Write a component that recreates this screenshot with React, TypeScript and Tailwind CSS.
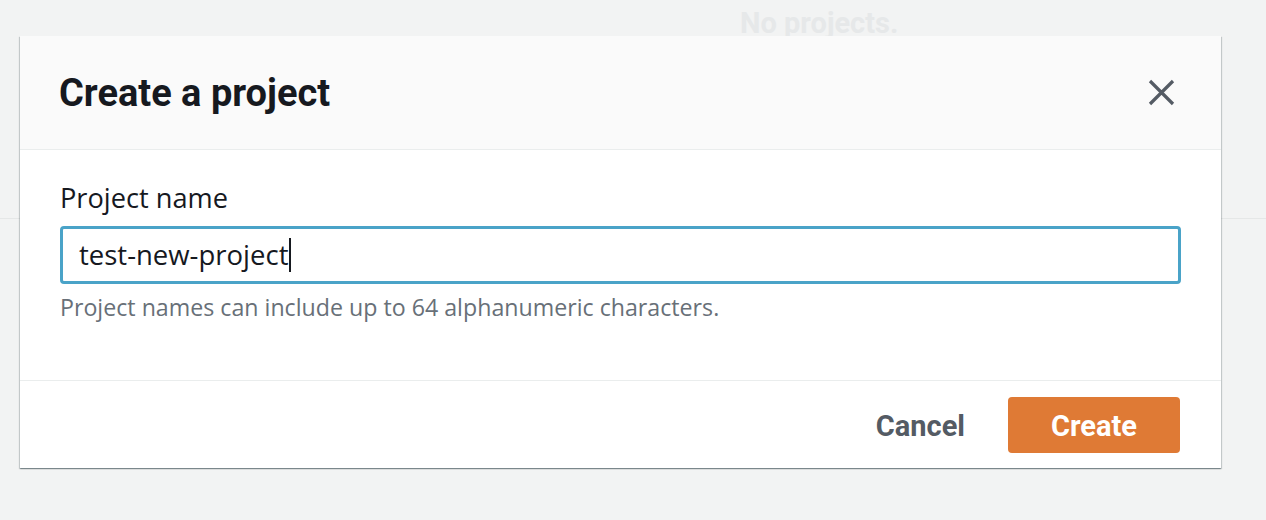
import React from 'react'

function CloseIcon() {
  return (
    <svg width="27" height="27" viewBox="0 0 27 27" fill="none" stroke="#545b64" strokeWidth={3.2}>
      <path d="M2 2L25 25M25 2L2 25" />
    </svg>
  )
}

export default function App() {
  return (
    <div className="relative h-[520px] w-full overflow-hidden bg-[#f2f3f3] font-[Roboto,sans-serif]">
      {/* page behind the dialog */}
      <div className="h-[219px] border-b border-[#e5e7e7] pl-[740px] pt-[9px]">
        <p className="text-[29px] font-bold leading-none text-[#e6e8e9]">No projects.</p>
      </div>

      {/* dialog */}
      <div className="absolute left-[20px] top-[36px] w-[1201px] bg-white shadow-[0_1px_1px_0_rgba(0,28,36,0.3),1px_1px_1px_0_rgba(0,28,36,0.15),-1px_1px_1px_0_rgba(0,28,36,0.15)]">
        <div className="flex h-[114px] items-center justify-between border-b border-[#eaeded] bg-[#fafafa] pl-[39px] pr-[46px]">
          <h2 className="text-[38px] font-bold leading-none text-[#16191f]">Create a project</h2>
          <button className="flex items-center justify-center">
            <CloseIcon />
          </button>
        </div>

        <div className="h-[231px] border-b border-[#eaeded] px-[40px] pt-[32px] font-['Open_Sans',sans-serif]">
          <label className="block text-[27.2px] leading-[32px] text-[#16191f]">Project name</label>
          <div className="mt-[12px] flex h-[58px] items-center rounded-[4px] border-[3px] border-[#4aa3c8] pl-[16px]">
            <span className="text-[27.5px] leading-none text-[#16191f]">test-new-project</span>
            <span className="ml-[1px] inline-block h-[34px] w-[1.5px] bg-[#16191f]" />
          </div>
          <p className="mt-[9px] text-[23.2px] leading-[28px] text-[#687078]">
            Project names can include up to 64 alphanumeric characters.
          </p>
        </div>

        <div className="flex h-[87px] items-center justify-end pr-[41px]">
          <button className="mr-[43px] pt-[4px] text-[29px] font-bold leading-none text-[#545b64]">Cancel</button>
          <button className="flex h-[56px] w-[172px] items-center justify-center rounded-[4px] bg-[#df7a35] pt-[4px] text-[29px] font-bold leading-none text-white">
            Create
          </button>
        </div>
      </div>
    </div>
  )
}
